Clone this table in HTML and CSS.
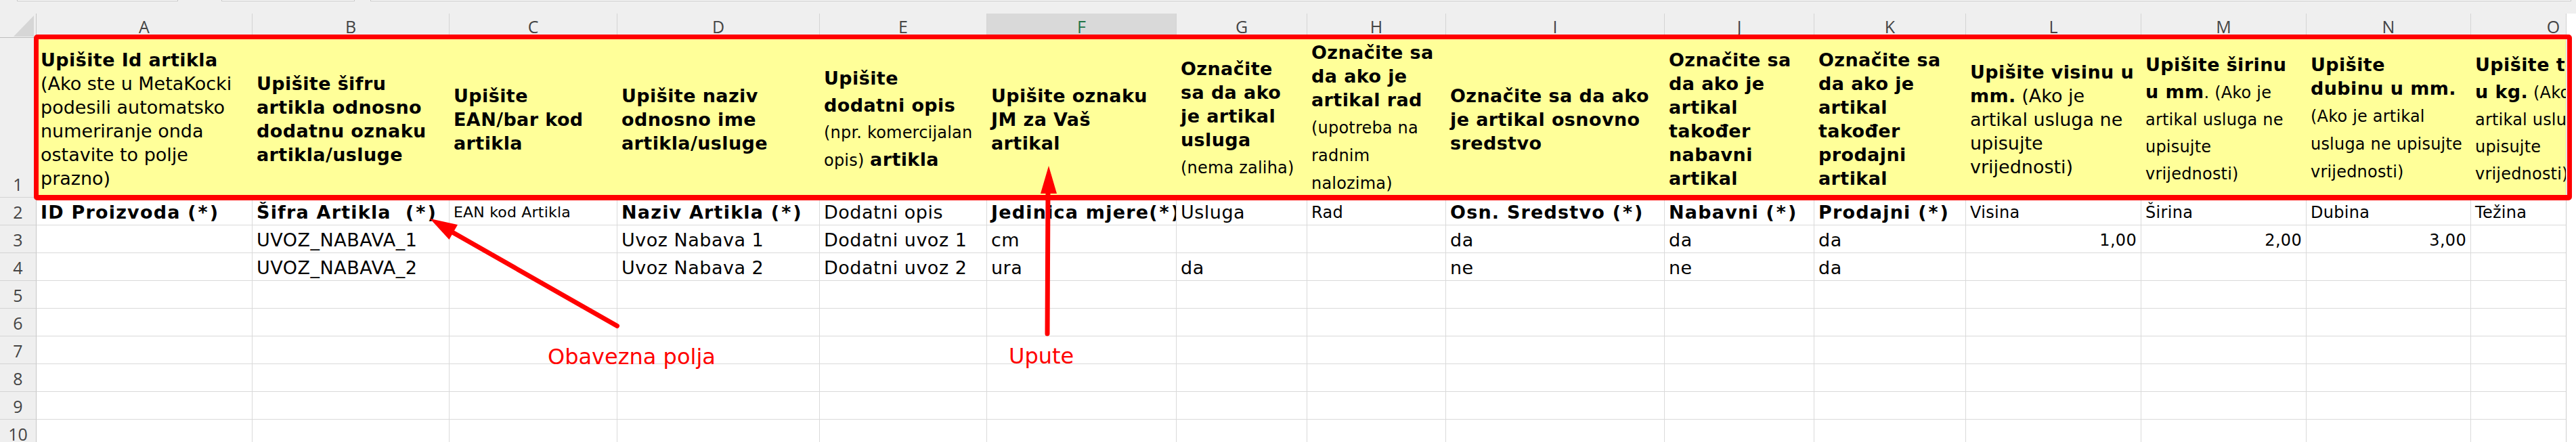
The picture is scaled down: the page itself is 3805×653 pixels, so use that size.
FILE: index.html
```html
<!DOCTYPE html>
<html lang="hr">
<head>
<meta charset="utf-8">
<title>Uvoz artikala</title>
<link rel="stylesheet" href="styles.css">
</head>
<body>
<div class="screen">
  <div class="topbar"><span class="box b1"></span><span class="box b2"></span><span class="box b3"></span></div>
  <div class="viewport">
    <div class="sheet">
      <div class="corner"><svg viewBox="0 0 54 36"><polygon points="20,34 50,34 50,3" fill="#d6d6d6"/></svg></div>
      <div class="colhead">A</div>
      <div class="colhead">B</div>
      <div class="colhead">C</div>
      <div class="colhead">D</div>
      <div class="colhead">E</div>
      <div class="colhead sel">F</div>
      <div class="colhead">G</div>
      <div class="colhead">H</div>
      <div class="colhead">I</div>
      <div class="colhead">J</div>
      <div class="colhead">K</div>
      <div class="colhead">L</div>
      <div class="colhead">M</div>
      <div class="colhead">N</div>
      <div class="colhead">O</div>

      <div class="rowhead">1</div>
      <div class="hcell">
        <div class="ln"><b>Upišite Id artikla</b></div>
        <div class="ln">(Ako ste u MetaKocki</div>
        <div class="ln">podesili automatsko</div>
        <div class="ln">numeriranje onda</div>
        <div class="ln">ostavite to polje</div>
        <div class="ln">prazno)</div>
      </div>
      <div class="hcell bold">
        <div class="ln">Upišite šifru</div>
        <div class="ln">artikla odnosno</div>
        <div class="ln">dodatnu oznaku</div>
        <div class="ln">artikla/usluge</div>
      </div>
      <div class="hcell bold">
        <div class="ln">Upišite</div>
        <div class="ln">EAN/bar kod</div>
        <div class="ln">artikla</div>
      </div>
      <div class="hcell bold">
        <div class="ln">Upišite naziv</div>
        <div class="ln">odnosno ime</div>
        <div class="ln">artikla/usluge</div>
      </div>
      <div class="hcell c40">
        <div class="ln"><b>Upišite</b></div>
        <div class="ln"><b>dodatni opis</b></div>
        <div class="ln sm">(npr. komercijalan</div>
        <div class="ln"><span class="sm">opis)</span> <b>artikla</b></div>
      </div>
      <div class="hcell bold">
        <div class="ln">Upišite oznaku</div>
        <div class="ln">JM za Vaš</div>
        <div class="ln">artikal</div>
      </div>
      <div class="hcell">
        <div class="ln"><b>Označite</b></div>
        <div class="ln"><b>sa da ako</b></div>
        <div class="ln"><b>je artikal</b></div>
        <div class="ln"><b>usluga</b></div>
        <div class="ln sm gap">(nema zaliha)</div>
      </div>
      <div class="hcell">
        <div class="ln"><b>Označite sa</b></div>
        <div class="ln"><b>da ako je</b></div>
        <div class="ln"><b>artikal rad</b></div>
        <div class="ln sm gap">(upotreba na</div>
        <div class="ln sm">radnim</div>
        <div class="ln sm">nalozima)</div>
      </div>
      <div class="hcell bold">
        <div class="ln">Označite sa da ako</div>
        <div class="ln">je artikal osnovno</div>
        <div class="ln">sredstvo</div>
      </div>
      <div class="hcell bold">
        <div class="ln">Označite sa</div>
        <div class="ln">da ako je</div>
        <div class="ln">artikal</div>
        <div class="ln">također</div>
        <div class="ln">nabavni</div>
        <div class="ln">artikal</div>
      </div>
      <div class="hcell bold">
        <div class="ln">Označite sa</div>
        <div class="ln">da ako je</div>
        <div class="ln">artikal</div>
        <div class="ln">također</div>
        <div class="ln">prodajni</div>
        <div class="ln">artikal</div>
      </div>
      <div class="hcell">
        <div class="ln"><b>Upišite visinu u</b></div>
        <div class="ln"><b>mm.</b> (Ako je</div>
        <div class="ln">artikal usluga ne</div>
        <div class="ln">upisujte</div>
        <div class="ln">vrijednosti)</div>
      </div>
      <div class="hcell c40">
        <div class="ln"><b>Upišite širinu</b></div>
        <div class="ln"><b>u mm</b><span class="sm">. (Ako je</span></div>
        <div class="ln sm">artikal usluga ne</div>
        <div class="ln sm">upisujte</div>
        <div class="ln sm">vrijednosti)</div>
      </div>
      <div class="hcell">
        <div class="ln"><b>Upišite</b></div>
        <div class="ln"><b>dubinu u mm.</b></div>
        <div class="ln sm gap">(Ako je artikal</div>
        <div class="ln sm">usluga ne upisujte</div>
        <div class="ln sm">vrijednosti)</div>
      </div>
      <div class="hcell c40">
        <div class="ln"><b>Upišite težinu</b></div>
        <div class="ln"><b>u kg.</b><span class="sm"> (Ako je</span></div>
        <div class="ln sm">artikal usluga ne</div>
        <div class="ln sm">upisujte</div>
        <div class="ln sm">vrijednosti)</div>
      </div>

      <div class="rowhead">2</div>
      <div class="cell"><b>ID Proizvoda <span class="ast">(*)</span></b></div>
      <div class="cell"><b>Šifra Artikla &nbsp;<span class="ast">(*)</span></b></div>
      <div class="cell xs">EAN kod Artikla</div>
      <div class="cell"><b>Naziv Artikla <span class="ast">(*)</span></b></div>
      <div class="cell">Dodatni opis</div>
      <div class="cell"><b>Jedinica mjere<span class="ast">(*)</span></b></div>
      <div class="cell">Usluga</div>
      <div class="cell sm">Rad</div>
      <div class="cell"><b>Osn. Sredstvo <span class="ast">(*)</span></b></div>
      <div class="cell"><b>Nabavni <span class="ast">(*)</span></b></div>
      <div class="cell"><b>Prodajni <span class="ast">(*)</span></b></div>
      <div class="cell sm">Visina</div>
      <div class="cell sm">Širina</div>
      <div class="cell sm">Dubina</div>
      <div class="cell sm">Težina</div>

      <div class="rowhead">3</div>
      <div class="cell"></div>
      <div class="cell">UVOZ_NABAVA_1</div>
      <div class="cell"></div>
      <div class="cell">Uvoz Nabava 1</div>
      <div class="cell">Dodatni uvoz 1</div>
      <div class="cell">cm</div>
      <div class="cell"></div>
      <div class="cell"></div>
      <div class="cell">da</div>
      <div class="cell">da</div>
      <div class="cell">da</div>
      <div class="cell sm num">1,00</div>
      <div class="cell sm num">2,00</div>
      <div class="cell sm num">3,00</div>
      <div class="cell"></div>

      <div class="rowhead">4</div>
      <div class="cell"></div>
      <div class="cell">UVOZ_NABAVA_2</div>
      <div class="cell"></div>
      <div class="cell">Uvoz Nabava 2</div>
      <div class="cell">Dodatni uvoz 2</div>
      <div class="cell">ura</div>
      <div class="cell">da</div>
      <div class="cell"></div>
      <div class="cell">ne</div>
      <div class="cell">ne</div>
      <div class="cell">da</div>
      <div class="cell"></div>
      <div class="cell"></div>
      <div class="cell"></div>
      <div class="cell"></div>

      <div class="rowhead">5</div>
      <div class="cell"></div><div class="cell"></div><div class="cell"></div><div class="cell"></div><div class="cell"></div>
      <div class="cell"></div><div class="cell"></div><div class="cell"></div><div class="cell"></div><div class="cell"></div>
      <div class="cell"></div><div class="cell"></div><div class="cell"></div><div class="cell"></div><div class="cell"></div>

      <div class="rowhead">6</div>
      <div class="cell"></div><div class="cell"></div><div class="cell"></div><div class="cell"></div><div class="cell"></div>
      <div class="cell"></div><div class="cell"></div><div class="cell"></div><div class="cell"></div><div class="cell"></div>
      <div class="cell"></div><div class="cell"></div><div class="cell"></div><div class="cell"></div><div class="cell"></div>

      <div class="rowhead">7</div>
      <div class="cell"></div><div class="cell"></div><div class="cell"></div><div class="cell"></div><div class="cell"></div>
      <div class="cell"></div><div class="cell"></div><div class="cell"></div><div class="cell"></div><div class="cell"></div>
      <div class="cell"></div><div class="cell"></div><div class="cell"></div><div class="cell"></div><div class="cell"></div>

      <div class="rowhead">8</div>
      <div class="cell"></div><div class="cell"></div><div class="cell"></div><div class="cell"></div><div class="cell"></div>
      <div class="cell"></div><div class="cell"></div><div class="cell"></div><div class="cell"></div><div class="cell"></div>
      <div class="cell"></div><div class="cell"></div><div class="cell"></div><div class="cell"></div><div class="cell"></div>

      <div class="rowhead">9</div>
      <div class="cell"></div><div class="cell"></div><div class="cell"></div><div class="cell"></div><div class="cell"></div>
      <div class="cell"></div><div class="cell"></div><div class="cell"></div><div class="cell"></div><div class="cell"></div>
      <div class="cell"></div><div class="cell"></div><div class="cell"></div><div class="cell"></div><div class="cell"></div>

      <div class="rowhead">10</div>
      <div class="cell"></div><div class="cell"></div><div class="cell"></div><div class="cell"></div><div class="cell"></div>
      <div class="cell"></div><div class="cell"></div><div class="cell"></div><div class="cell"></div><div class="cell"></div>
      <div class="cell"></div><div class="cell"></div><div class="cell"></div><div class="cell"></div><div class="cell"></div>
    </div>
  </div>

  <div class="redframe"></div>
  <svg class="arrows" viewBox="0 0 3805 653">
    <line x1="911.5" y1="481.5" x2="669" y2="343.5" stroke="#ff0000" stroke-width="7" stroke-linecap="round"/>
    <polygon points="635,323 676,332 663.5,354" fill="#ff0000"/>
    <line x1="1547" y1="493" x2="1548" y2="282" stroke="#ff0000" stroke-width="7" stroke-linecap="round"/>
    <polygon points="1549,245 1561,286 1537,286" fill="#ff0000"/>
  </svg>
  <div class="note n-oblig">Obavezna polja</div>
  <div class="note n-upute">Upute</div>
</div>
</body>
</html>
```

FILE: styles.css
```css
* { box-sizing: border-box; }
html, body { margin: 0; padding: 0; background: #fff; }
body { font-family: "DejaVu Sans", Verdana, sans-serif; color: #000; }

.screen {
  position: relative;
  width: 3805px;
  height: 653px;
  overflow: hidden;
  background: #fff;
}

.topbar {
  height: 20px;
  width: 3805px;
  background: #efefef;
  display: flex;
  align-items: flex-start;
  padding-left: 25px;
}
.box {
  display: block;
  height: 2px;
  background: #fff;
  border: 1px solid #c8c8c8;
  border-top: 0;
}
.b1 { width: 238px; margin-right: 64px; }
.b2 { width: 197px; margin-right: 23px; }
.b3 { width: 3251px; }

.viewport {
  width: 3791px;
  height: 633px;
  overflow: hidden;
  border-right: 1px solid #d0d0d0;
}

.sheet {
  display: grid;
  grid-template-columns: 54px 319px 291px 248px 299px 247px 280px 193px 205px 323px 221px 224px 259px 244px 243px 244px;
  grid-template-rows: 36px 236px repeat(9, 41px);
  width: max-content;
}

.corner {
  background: #efefef;
  border-right: 1px solid #c6c6c6;
  border-bottom: 1px solid #bdbdbd;
}
.corner svg { display: block; width: 54px; height: 36px; }

.colhead {
  background: #efefef;
  border-right: 1px solid #d4d4d4;
  border-bottom: 1px solid #bdbdbd;
  font-family: "Open Sans", sans-serif;
  font-size: 25px;
  line-height: 39px;
  color: #444;
  text-align: center;
  overflow: hidden;
}
.colhead.sel {
  background: #d9d9d9;
  color: #217346;
  border-bottom: 2px solid #217346;
}

.rowhead {
  background: #efefef;
  border-right: 1px solid #c6c6c6;
  border-bottom: 1px solid #d4d4d4;
  font-family: "Open Sans", sans-serif;
  font-size: 25px;
  line-height: 32px;
  color: #444;
  display: flex;
  align-items: flex-end;
  justify-content: center;
  padding-bottom: 3px;
}

.hcell {
  background: #ffff99;
  padding: 4px 6px 0;
  display: flex;
  flex-direction: column;
  justify-content: center;
  overflow: hidden;
  white-space: nowrap;
  font-size: 27px;
}
.hcell.bold { font-weight: bold; letter-spacing: 0.4px; }
.hcell b { letter-spacing: 0.4px; }
.ln { line-height: 35px; }
.sm { font-size: 24px; letter-spacing: 0.2px; }
.ln.sm { line-height: 41px; }
.c40 .ln { line-height: 40px; }
.gap { margin-top: 4px; }

.cell {
  border-right: 1px solid #dadada;
  border-bottom: 1px solid #dadada;
  display: flex;
  align-items: flex-end;
  padding: 0 6px 2px;
  overflow: hidden;
  white-space: nowrap;
  font-size: 27px;
  line-height: 32px;
  letter-spacing: 0.5px;
}
.cell b { letter-spacing: 1.2px; }
.cell.sm { font-size: 24px; letter-spacing: 0.3px; }
.cell.xs { font-size: 22px; letter-spacing: 0.2px; }
.cell.num { justify-content: flex-end; }
.ast { letter-spacing: 3px; }

.redframe {
  position: absolute;
  left: 50px;
  top: 51px;
  width: 3749px;
  height: 245px;
  border: 7px solid #ff0000;
  border-bottom-width: 8px;
  border-radius: 5px;
}

.arrows {
  position: absolute;
  left: 0;
  top: 0;
  width: 3805px;
  height: 653px;
  pointer-events: none;
}

.note {
  position: absolute;
  font-size: 32px;
  line-height: 32px;
  color: #ff0000;
  white-space: nowrap;
}
.n-oblig { left: 809px; top: 511px; }
.n-upute { left: 1490px; top: 510px; }
```
